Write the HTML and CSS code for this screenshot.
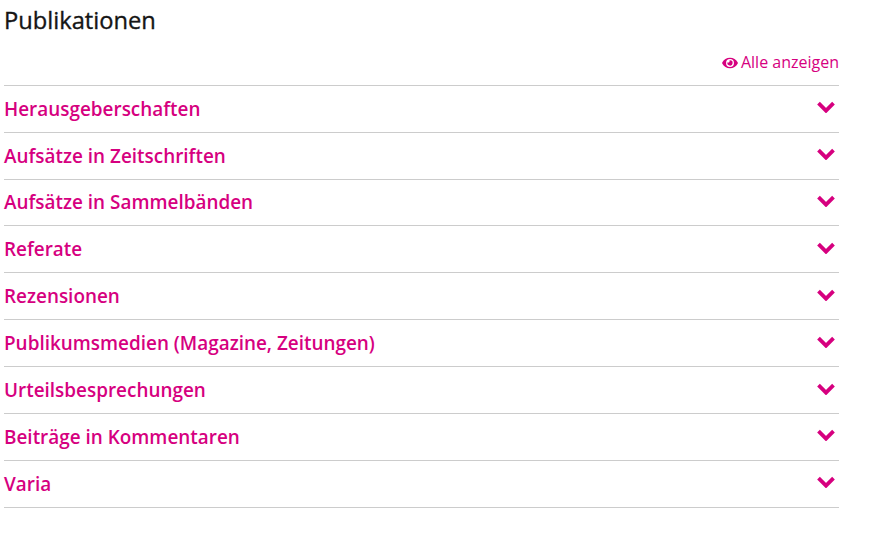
FILE: index.html
```html
<!DOCTYPE html>
<html lang="de">
<head>
    <meta charset="UTF-8">
    <meta name="viewport" content="width=device-width, initial-scale=1.0">
    <title>Publikationen</title>
    <link rel="stylesheet" href="styles.css">
</head>
<body>
    <div class="pub">
        <h2 class="pub-title">Publikationen</h2>

        <div class="show-all">
            <a href="#">
                <svg class="eye" viewBox="0 0 576 512"><path d="M572.5 241.4C518.3 135.6 410.9 64 288 64S57.7 135.6 3.5 241.4a32.4 32.4 0 0 0 0 29.2C57.7 376.4 165.1 448 288 448s230.3-71.6 284.5-177.4a32.4 32.4 0 0 0 0-29.2zM288 400a144 144 0 1 1 144-144 143.9 143.9 0 0 1-144 144zm0-240a95.3 95.3 0 0 0-25.3 3.8 47.9 47.9 0 0 1-66.9 66.9A95.8 95.8 0 1 0 288 160z"/></svg>
                Alle anzeigen
            </a>
        </div>

        <ul class="pub-list">
            <li><a href="#">Herausgeberschaften</a><svg class="chev" viewBox="0 0 18 12"><path d="M1.5 2.2l7.5 7.5 7.5-7.5"/></svg></li>
            <li><a href="#">Aufsätze in Zeitschriften</a><svg class="chev" viewBox="0 0 18 12"><path d="M1.5 2.2l7.5 7.5 7.5-7.5"/></svg></li>
            <li><a href="#">Aufsätze in Sammelbänden</a><svg class="chev" viewBox="0 0 18 12"><path d="M1.5 2.2l7.5 7.5 7.5-7.5"/></svg></li>
            <li><a href="#">Referate</a><svg class="chev" viewBox="0 0 18 12"><path d="M1.5 2.2l7.5 7.5 7.5-7.5"/></svg></li>
            <li><a href="#">Rezensionen</a><svg class="chev" viewBox="0 0 18 12"><path d="M1.5 2.2l7.5 7.5 7.5-7.5"/></svg></li>
            <li><a href="#">Publikumsmedien (Magazine, Zeitungen)</a><svg class="chev" viewBox="0 0 18 12"><path d="M1.5 2.2l7.5 7.5 7.5-7.5"/></svg></li>
            <li><a href="#">Urteilsbesprechungen</a><svg class="chev" viewBox="0 0 18 12"><path d="M1.5 2.2l7.5 7.5 7.5-7.5"/></svg></li>
            <li><a href="#">Beiträge in Kommentaren</a><svg class="chev" viewBox="0 0 18 12"><path d="M1.5 2.2l7.5 7.5 7.5-7.5"/></svg></li>
            <li><a href="#">Varia</a><svg class="chev" viewBox="0 0 18 12"><path d="M1.5 2.2l7.5 7.5 7.5-7.5"/></svg></li>
        </ul>
    </div>
</body>
</html>
```

FILE: styles.css
```css
body { margin: 0; background: #fff; font-family: "Open Sans", sans-serif; }
a { color: #d6007f; text-decoration: none; }
.pub { width: 835px; margin-left: 4px; }
.pub-title { margin: 0; padding-top: 6px; font-size: 23.7px; line-height: 28px; font-weight: 400; color: #151515; -webkit-text-stroke: 0.35px #151515; }
.show-all { margin-top: 14px; height: 36.75px; line-height: 28px; text-align: right; font-size: 16px; }
.eye { width: 16px; height: 14px; margin-right: -1px; fill: #d6007f; vertical-align: -2px; }
.pub-list { margin: 0; padding: 0; list-style: none; border-top: 1px solid #ccc; }
.pub-list li { display: flex; justify-content: space-between; align-items: center; box-sizing: border-box; height: 46.9px; border-bottom: 1px solid #ccc; }
.pub-list a { font-size: 18.92px; font-weight: 600; }
.chev { width: 18px; height: 12px; margin-top: -3px; margin-right: 4.5px; fill: none; stroke: #d6007f; stroke-width: 3.8; }
```
